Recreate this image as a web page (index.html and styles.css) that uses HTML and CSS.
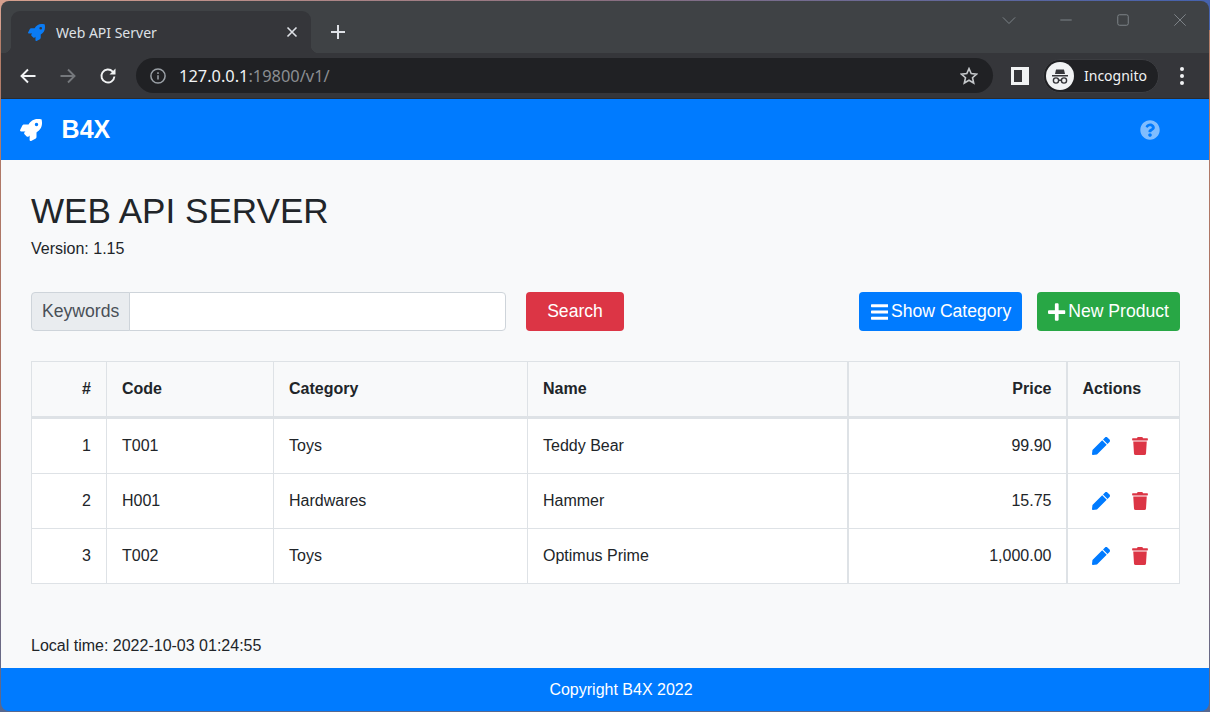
FILE: index.html
```html
<!DOCTYPE html>
<html lang="en">
<head>
    <meta charset="UTF-8">
    <title>Web API Server</title>
    <link rel="stylesheet" href="styles.css">
</head>
<body>
    <svg class="defs" xmlns="http://www.w3.org/2000/svg">
        <symbol id="i-rocket" viewBox="0 0 512 512"><path d="M505.12 19.09c-1.19-5.53-6.66-11-12.21-12.19C460.72 0 435.51 0 410.41 0 307.18 0 245.27 55.2 199.05 128H94.84c-16.35.02-35.56 11.88-42.89 26.48L2.52 253.3A28.4 28.4 0 0 0 0 264a24 24 0 0 0 24 24h103.81l-22.47 22.47c-11.37 11.36-13 32.26 0 45.25l50.9 50.9c11.16 11.19 32.16 13.16 45.28 0l22.47-22.47V488a24 24 0 0 0 24 24 28.56 28.56 0 0 0 10.71-2.52l98.73-49.39c14.63-7.3 26.51-26.5 26.51-42.86V312.8c72.6-46.31 128.03-108.41 128.03-211.1.02-25.2.02-50.4-6.93-82.61zM384.04 168a40 40 0 1 1 40.01-40 40.02 40.02 0 0 1-40.01 40z"/></symbol>
        <symbol id="i-help" viewBox="0 0 512 512"><path d="M504 256c0 137-111 248-248 248S8 393 8 256C8 119.1 119 8 256 8s248 111.1 248 248zM262.7 90c-54.5 0-89.3 23-116.6 63.8-3.5 5.3-2.4 12.4 2.7 16.2l34.7 26.3c5.2 4 12.6 3 16.7-2.1 17.9-22.7 30.1-35.8 57.3-35.8 20.4 0 45.7 13.1 45.7 33 0 15-12.4 22.6-32.5 34C247.1 238.5 216 254.9 216 296v4c0 6.6 5.4 12 12 12h56c6.6 0 12-5.4 12-12v-1.3c0-28.5 83.2-29.7 83.2-106.7 0-58-60.2-102-116.5-102zM256 338c-25.4 0-46 20.6-46 46s20.6 46 46 46 46-20.6 46-46-20.6-46-46-46z"/></symbol>
        <symbol id="i-bars" viewBox="0 0 448 512"><path d="M16 132h416c8.8 0 16-7.2 16-16V76c0-8.8-7.2-16-16-16H16C7.2 60 0 67.2 0 76v40c0 8.8 7.2 16 16 16zm0 160h416c8.8 0 16-7.2 16-16v-40c0-8.8-7.2-16-16-16H16c-8.8 0-16 7.2-16 16v40c0 8.8 7.2 16 16 16zm0 160h416c8.8 0 16-7.2 16-16v-40c0-8.8-7.2-16-16-16H16c-8.8 0-16 7.2-16 16v40c0 8.8 7.2 16 16 16z"/></symbol>
        <symbol id="i-plus" viewBox="0 0 448 512"><path d="M416 208H272V64c0-17.7-14.3-32-32-32h-32c-17.7 0-32 14.3-32 32v144H32c-17.7 0-32 14.3-32 32v32c0 17.7 14.3 32 32 32h144v144c0 17.7 14.3 32 32 32h32c17.7 0 32-14.3 32-32V304h144c17.7 0 32-14.3 32-32v-32c0-17.7-14.3-32-32-32z"/></symbol>
        <symbol id="i-pen" viewBox="0 0 512 512"><path d="M290.74 93.24l128.02 128.02-277.99 277.99-114.14 12.6C11.35 513.54-1.56 500.62.14 485.34l12.7-114.22 277.9-277.88zm207.2-19.06l-60.11-60.11c-18.75-18.75-49.16-18.75-67.91 0l-56.55 56.55 128.02 128.02 56.55-56.55c18.75-18.76 18.75-49.16 0-67.91z"/></symbol>
        <symbol id="i-trash" viewBox="0 0 448 512"><path d="M432 32H312l-9.4-18.7A24 24 0 0 0 281.1 0H166.8a23.7 23.7 0 0 0-21.4 13.3L136 32H16A16 16 0 0 0 0 48v32a16 16 0 0 0 16 16h416a16 16 0 0 0 16-16V48a16 16 0 0 0-16-16zM53.2 467a48 48 0 0 0 47.9 45h245.8a48 48 0 0 0 47.9-45L416 128H32z"/></symbol>
    </svg>

    <div class="window">
        <div class="titlebar">
            <div class="tab">
                <svg class="tab-icon"><use href="#i-rocket"/></svg>
                <span class="tab-title">Web API Server</span>
                <svg class="tab-close" viewBox="0 0 12 12"><path d="M1.5 1.5l9 9M10.5 1.5l-9 9"/></svg>
            </div>
            <svg class="new-tab" viewBox="0 0 16 16"><path d="M8 1v14M1 8h14"/></svg>
            <div class="win-controls">
                <span class="win-btn"><svg viewBox="0 0 16 16"><path d="M1 5l7 7 7-7"/></svg></span>
                <span class="win-btn"><svg viewBox="0 0 16 16"><path d="M1.5 8h13"/></svg></span>
                <span class="win-btn"><svg viewBox="0 0 16 16"><rect x="2" y="2" width="12" height="12" rx="2"/></svg></span>
                <span class="win-btn"><svg viewBox="0 0 16 16"><path d="M1.5 1.5l13 13M14.5 1.5l-13 13"/></svg></span>
            </div>
        </div>

        <div class="toolbar">
            <svg class="tool-icon" viewBox="0 0 18 18"><path d="M16.5 9h-14M9 2.5L2.5 9 9 15.5"/></svg>
            <svg class="tool-icon dim" viewBox="0 0 18 18"><path d="M1.5 9h14M9 2.5L15.5 9 9 15.5"/></svg>
            <svg class="tool-icon reload" viewBox="0 0 18 18"><path d="M15.4 9.5a6.5 6.5 0 1 1-1.7-4.9L15.5 6.5"/><path class="solid" d="M16.5 1.5v6h-6z"/></svg>
            <div class="omnibox">
                <svg class="info-icon" viewBox="0 0 16 16"><circle cx="8" cy="8" r="7.1"/><path d="M8 7.2v4.4M8 4.2v1.7"/></svg>
                <span class="url"><span class="host">127.0.0.1</span>:19800/v1/</span>
                <svg class="star-icon" viewBox="0 0 18 18"><path d="M9 1.6l2.2 5 5.4.5-4.1 3.6 1.2 5.3L9 13.2 4.3 16l1.2-5.3-4.1-3.6 5.4-.5z"/></svg>
            </div>
            <div class="side-panel"><span></span></div>
            <div class="profile">
                <span class="avatar">
                    <svg viewBox="0 0 28 28"><path class="fill" d="M10 7.5h8l1 4.5h-10zM6 13h16v1.4H6z"/><circle cx="10" cy="18.5" r="2.6"/><circle cx="18" cy="18.5" r="2.6"/><path d="M12.6 18.2h2.8"/></svg>
                </span>
                <span class="profile-name">Incognito</span>
            </div>
            <div class="kebab"><span></span><span></span><span></span></div>
        </div>

        <nav class="navbar">
            <svg class="nav-logo"><use href="#i-rocket"/></svg>
            <span class="brand">B4X</span>
            <svg class="nav-help"><use href="#i-help"/></svg>
        </nav>

        <main class="main">
            <h1 class="title">WEB API SERVER</h1>
            <p class="version">Version: 1.15</p>

            <div class="actions">
                <div class="input-group">
                    <span class="input-label">Keywords</span>
                    <input class="input-box" type="text">
                </div>
                <button class="btn btn-red btn-search">Search</button>
                <button class="btn btn-blue btn-push"><svg class="btn-icon"><use href="#i-bars"/></svg>Show Category</button>
                <button class="btn btn-green"><svg class="btn-icon"><use href="#i-plus"/></svg>New Product</button>
            </div>

            <table class="products">
                <colgroup>
                    <col class="col-num"><col class="col-code"><col class="col-cat"><col class="col-name"><col class="col-price"><col class="col-act">
                </colgroup>
                <thead>
                    <tr>
                        <th class="right">#</th>
                        <th>Code</th>
                        <th>Category</th>
                        <th>Name</th>
                        <th class="right price">Price</th>
                        <th class="act">Actions</th>
                    </tr>
                </thead>
                <tbody>
                    <tr>
                        <td class="right">1</td><td>T001</td><td>Toys</td><td>Teddy Bear</td><td class="right price">99.90</td>
                        <td class="act"><div class="row-icons"><svg class="pen"><use href="#i-pen"/></svg><svg class="trash"><use href="#i-trash"/></svg></div></td>
                    </tr>
                    <tr>
                        <td class="right">2</td><td>H001</td><td>Hardwares</td><td>Hammer</td><td class="right price">15.75</td>
                        <td class="act"><div class="row-icons"><svg class="pen"><use href="#i-pen"/></svg><svg class="trash"><use href="#i-trash"/></svg></div></td>
                    </tr>
                    <tr>
                        <td class="right">3</td><td>T002</td><td>Toys</td><td>Optimus Prime</td><td class="right price">1,000.00</td>
                        <td class="act"><div class="row-icons"><svg class="pen"><use href="#i-pen"/></svg><svg class="trash"><use href="#i-trash"/></svg></div></td>
                    </tr>
                </tbody>
            </table>

            <p class="local-time">Local time: 2022-10-03 01:24:55</p>
        </main>

        <footer class="footer">Copyright B4X 2022</footer>
    </div>
</body>
</html>
```

FILE: styles.css
```css
*{
    box-sizing: border-box;
    padding: 0;
    margin: 0;
}
body{
    width: 1210px;
    height: 712px;
    padding: 1px 1px 0 1px;
    overflow: hidden;
    background: linear-gradient(90deg, #d6a08e, #8a6f80 50%, #4562ae) top / 100% 30px no-repeat,
        linear-gradient(180deg, #b5806a, #a86f62 60%, #58688f);
    font-family: "Liberation Sans", Arial, sans-serif;
    font-size: 16px;
    color: #212529;
}
.defs{
    display: none;
}
svg{
    display: block;
    fill: none;
    flex: none;
}
.window{
    height: 710px;
    display: flex;
    flex-direction: column;
    overflow: hidden;
    border-radius: 8px;
}

/* browser chrome */
.titlebar{
    height: 52px;
    padding: 10px 0 0 10px;
    display: flex;
    background: #3f4245;
}
.tab{
    position: relative;
    width: 300px;
    height: 42px;
    padding: 0 13px 0 17px;
    display: flex;
    align-items: center;
    background: #35363a;
    border-radius: 9px 9px 0 0;
    font-family: "Noto Sans", sans-serif;
    font-size: 14px;
    color: #dee1e6;
}
.tab::before,
.tab::after{
    content: "";
    position: absolute;
    bottom: 0;
    width: 8px;
    height: 8px;
}
.tab::before{
    left: -8px;
    background: radial-gradient(circle at 0 0, transparent 8px, #35363a 8.5px);
}
.tab::after{
    right: -8px;
    background: radial-gradient(circle at 100% 0, transparent 8px, #35363a 8.5px);
}
.tab-icon{
    width: 17px;
    height: 17px;
    fill: #0a7bf5;
}
.tab-title{
    margin-left: 11px;
    flex: 1;
}
.tab-close{
    width: 12px;
    height: 12px;
    stroke: #dee1e6;
    stroke-width: 1.6;
}
.new-tab{
    width: 16px;
    height: 16px;
    margin: 13px 0 0 19px;
    stroke: #dee1e6;
    stroke-width: 2;
}
.win-controls{
    margin: -10px 1px 0 auto;
    display: flex;
    height: 38px;
}
.win-btn{
    width: 57px;
    display: flex;
    align-items: center;
    justify-content: center;
}
.win-btn svg{
    width: 14px;
    height: 14px;
    stroke: #80858a;
    stroke-width: 1.1;
}
.toolbar{
    height: 46px;
    padding: 0 0 0 18px;
    display: flex;
    align-items: center;
    background: #35363a;
    border-bottom: 1px solid #2a2b2e;
}
.tool-icon{
    width: 18px;
    height: 18px;
    margin-right: 22px;
    stroke: #f1f3f4;
    stroke-width: 1.9;
}
.tool-icon.dim{
    stroke: #75787c;
}
.tool-icon.reload{
    margin-right: 0;
}
.tool-icon .solid{
    fill: #f1f3f4;
    stroke: none;
}
.omnibox{
    width: 857px;
    height: 35px;
    margin-left: 19px;
    padding: 0 14px;
    display: flex;
    align-items: center;
    background: #202124;
    border-radius: 18px;
}
.info-icon{
    width: 16px;
    height: 16px;
    stroke: #9aa0a6;
    stroke-width: 1.5;
}
.url{
    margin-left: 13px;
    flex: 1;
    font-family: "Noto Sans", sans-serif;
    font-size: 16.4px;
    color: #8b8e92;
}
.host{
    color: #f1f3f4;
}
.star-icon{
    width: 18px;
    height: 18px;
    margin-right: 1px;
    stroke: #c4c7ca;
    stroke-width: 1.6;
}
.side-panel{
    width: 18px;
    height: 18px;
    margin-left: 18px;
    padding: 3px 7px 3px 3px;
    background: #f1f3f4;
}
.side-panel span{
    display: block;
    height: 100%;
    background: #35363a;
}
.profile{
    width: 116px;
    height: 34px;
    margin-left: 14px;
    padding-left: 2px;
    display: flex;
    align-items: center;
    background: #202124;
    border: 1px solid #3c3d41;
    border-radius: 17px;
}
.avatar{
    width: 28px;
    height: 28px;
    border-radius: 50%;
    background: #f1f3f4;
}
.avatar svg{
    width: 28px;
    height: 28px;
    stroke: #35363a;
    stroke-width: 1.4;
}
.avatar .fill{
    fill: #35363a;
    stroke: none;
}
.profile-name{
    margin-left: 10px;
    font-family: "Noto Sans", sans-serif;
    font-size: 14px;
    color: #f1f3f4;
}
.kebab{
    margin-left: 21px;
    display: flex;
    flex-direction: column;
    gap: 3px;
}
.kebab span{
    width: 4px;
    height: 4px;
    border-radius: 50%;
    background: #f1f3f4;
}

/* page */
.navbar{
    height: 61px;
    padding: 0 49px 0 19px;
    display: flex;
    align-items: center;
    background: #007bff;
}
.nav-logo{
    width: 22px;
    height: 22px;
    fill: #fff;
}
.brand{
    margin-left: 19.6px;
    font-size: 25px;
    font-weight: bold;
    color: #fff;
}
.nav-help{
    width: 20px;
    height: 20px;
    margin-left: auto;
    fill: rgba(255, 255, 255, .5);
}
.main{
    flex: 1;
    padding: 30px 29px 10px 30px;
    display: flex;
    flex-direction: column;
    background: #f8f9fa;
}
.title{
    font-size: 35.1px;
    font-weight: normal;
    line-height: 42px;
}
.version{
    margin-top: 5px;
    line-height: 24px;
}
.actions{
    margin-top: 31px;
    display: flex;
}
.input-group{
    width: 475px;
    height: 39px;
    display: flex;
}
.input-label{
    padding: 0 10px;
    display: flex;
    align-items: center;
    font-size: 17.6px;
    color: #495057;
    background: #e9ecef;
    border: 1px solid #ced4da;
    border-radius: 4px 0 0 4px;
}
.input-box{
    flex: 1;
    margin-left: -1px;
    background: #fff;
    border: 1px solid #ced4da;
    border-radius: 0 4px 4px 0;
}
.btn{
    height: 39px;
    padding: 0 11px;
    display: flex;
    align-items: center;
    border: 0;
    border-radius: 4px;
    font-family: inherit;
    font-size: 17.6px;
    color: #fff;
}
.btn-red{
    background: #dc3545;
}
.btn-blue{
    padding-left: 12px;
    background: #007bff;
}
.btn-green{
    margin-left: 15px;
    background: #28a745;
}
.btn-search{
    width: 98px;
    margin-left: 20px;
    justify-content: center;
}
.btn-push{
    margin-left: auto;
}
.btn-icon{
    width: 17.5px;
    height: 20px;
    margin-right: 2.5px;
    fill: #fff;
}
.products{
    width: 1148px;
    margin-top: 30px;
    table-layout: fixed;
    border-collapse: collapse;
}
.col-num{ width: 75px; }
.col-code{ width: 167px; }
.col-cat{ width: 254px; }
.col-name{ width: 320px; }
.col-price{ width: 219px; }
.col-act{ width: 113px; }
.products th,
.products td{
    padding: 0 15px;
    text-align: left;
    border: 1px solid #dee2e6;
}
.products th{
    height: 56px;
    border-bottom: 3px solid #dee2e6;
}
.products td{
    height: 55px;
    background: #fff;
}
.products tbody tr:first-child td{
    height: 56px;
}
.products .right{
    text-align: right;
}
.products .price{
    padding-right: 14px;
    border-left-width: 2px;
    border-right-width: 2px;
}
.row-icons{
    padding-left: 9px;
    display: flex;
    align-items: center;
    gap: 22px;
}
.pen{
    width: 18px;
    height: 18px;
    fill: #007bff;
}
.trash{
    width: 16px;
    height: 18px;
    fill: #dc3545;
}
.local-time{
    margin-top: auto;
    line-height: 24px;
}
.footer{
    height: 43px;
    padding-left: 32px;
    display: flex;
    align-items: center;
    justify-content: center;
    background: #007bff;
    color: #fff;
}
```
